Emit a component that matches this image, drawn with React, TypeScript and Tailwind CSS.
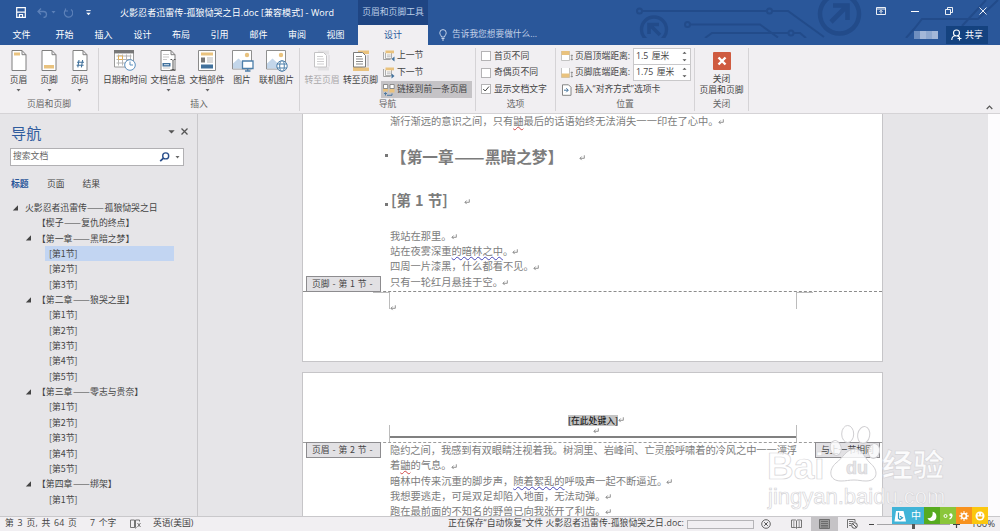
import React from 'react';

const TABS = [
  { label: '文件', width: 'w-[43px]' },
  { label: '开始', width: 'w-[43px]' },
  { label: '插入', width: 'w-[35px]' },
  { label: '设计', width: 'w-[43px]' },
  { label: '布局', width: 'w-[34px]' },
  { label: '引用', width: 'w-[43px]' },
  { label: '邮件', width: 'w-[35px]' },
  { label: '审阅', width: 'w-[42px]' },
  { label: '视图', width: 'w-[35px]' },
];

interface OutlineItem {
  level: number;
  text: string;
  selected?: boolean;
}

const OUTLINE: OutlineItem[] = [
  { level: 0, text: '火影忍者迅雷传——孤狼恸哭之日' },
  { level: 1, text: '【楔子——复仇的终点】' },
  { level: 2, text: '【第一章——黑暗之梦】' },
  { level: 3, text: '[第1节]', selected: true },
  { level: 3, text: '[第2节]' },
  { level: 3, text: '[第3节]' },
  { level: 2, text: '【第二章——狼哭之里】' },
  { level: 3, text: '[第1节]' },
  { level: 3, text: '[第2节]' },
  { level: 3, text: '[第3节]' },
  { level: 3, text: '[第4节]' },
  { level: 3, text: '[第5节]' },
  { level: 2, text: '【第三章——零志与贵奈】' },
  { level: 3, text: '[第1节]' },
  { level: 3, text: '[第2节]' },
  { level: 3, text: '[第3节]' },
  { level: 3, text: '[第4节]' },
  { level: 3, text: '[第5节]' },
  { level: 2, text: '【第四章——绑架】' },
  { level: 3, text: '[第1节]' },
];

const Caret = ({ className = '' }: { className?: string }) => (
  <svg width="5" height="3" viewBox="0 0 5 3" className={className}>
    <path d="M0.5 0h4L2.5 2.4z" fill="currentColor" />
  </svg>
);

// Full-width double dash, stretched to exactly two characters
const DashText = ({ text }: { text: string }) => {
  const [before, after] = text.split('——');
  if (after === undefined) return <>{text}</>;
  return (
    <>
      {before}
      <span className="inline-flex w-[2em] justify-center"><span className="inline-block scale-x-[1.14]">——</span></span>
      {after}
    </>
  );
};

const PageOutline = () => (
  <path d="M1 .5h10l4 4.2v15.8H1zM11 .5v4.2h4" fill="#fff" stroke="#7f7f7f" />
);

const HeaderIcon = () => (
  <svg width="16" height="21" viewBox="0 0 16 21">
    <PageOutline />
    <path d="M3 2.5h6v3H3z" fill="#e9c27e" />
  </svg>
);

const FooterIcon = () => (
  <svg width="16" height="21" viewBox="0 0 16 21">
    <PageOutline />
    <path d="M3 15h10v3.5H3z" fill="#e9c27e" />
  </svg>
);

const PageNumberIcon = () => (
  <svg width="16" height="21" viewBox="0 0 16 21">
    <PageOutline />
    <path d="M7 10l-1.2 7.4M10.6 10l-1.2 7.4M5 12.2h7M4.6 15.2h7" stroke="#41719c" strokeWidth="1.1" fill="none" />
  </svg>
);

const DateTimeIcon = () => (
  <svg width="22" height="21" viewBox="0 0 22 21">
    <path d="M.5 .5h19v16.5H.5z" fill="#fff" stroke="#9a9a9a" />
    <path d="M0 0h20v3.4H0z" fill="#777" />
    <path d="M2.5 6h15M2.5 9.5h15M2.5 13h12M4.5 4.5v11M8.5 4.5v11M12.5 4.5v11M16.5 4.5v6" stroke="#b5b5b5" />
    <path d="M4.5 6h4v3.5h-4z" fill="#fff" stroke="#dfae58" />
    <circle cx="16" cy="15" r="5.3" fill="#fff" stroke="#5b8fbe" />
    <path d="M16 11.5V15h3" fill="none" stroke="#5b8fbe" />
  </svg>
);

const DocInfoIcon = () => (
  <svg width="16" height="21" viewBox="0 0 16 21">
    <PageOutline />
    <path d="M3 4.5h6M3 7h6M3 9.5h4M3 18h7" stroke="#c9c9c9" />
    <path d="M2.5 13h8v3.5h-8z" fill="#41719c" />
    <path d="M4 14.7h5" stroke="#d8e5f1" />
    <path d="M10.5 9.5h1.5l1 1 1-1h1.5M13 10.5v8.5M10.5 20h1.5l1-1 1 1h1.5" stroke="#555" fill="none" />
  </svg>
);

const QuickPartsIcon = () => (
  <svg width="18" height="21" viewBox="0 0 18 21">
    <path d="M.5 .5h17v20H.5z" fill="#fff" stroke="#8a8a8a" />
    <path d="M3 2.5h12v3H3z" fill="#e9c27e" />
    <path d="M3 7.5h4v5H3z" fill="#777" />
    <path d="M9 8h6M9 10h6M9 12h6" stroke="#b5b5b5" />
    <path d="M3 14.5h12v4H3z" fill="#41719c" />
  </svg>
);

const PictureIcon = ({ online = false }: { online?: boolean }) => (
  <svg width="23" height="22" viewBox="0 0 23 22">
    <path d="M1.5 .5h19v18.5h-19z" fill="#fff" stroke="#8f8f8f" />
    <circle cx="16" cy="5" r="2.2" fill="#e9c27e" />
    <path d="M2 18.5v-5l5.5-5 6 5.5v4.5z" fill="#c3d6ea" />
    {online ? (
      <g fill="#fff" stroke="#4d7faa">
        <circle cx="17" cy="16" r="5.2" />
        <ellipse cx="17" cy="16" rx="2.3" ry="5.2" />
        <path d="M12 14h10M12 18h10" />
      </g>
    ) : (
      <g fill="#fff" stroke="#4d7faa" strokeWidth="1.3">
        <path d="M11.5 11h10.5v7.5H11.5z" />
        <path d="M16.7 18.5v2.5M14 21h5.5" />
      </g>
    )}
  </svg>
);

const GotoIcon = ({ footer = false }: { footer?: boolean }) => (
  <svg width="18" height="22" viewBox="0 0 18 22">
    {footer ? (
      <path d="M6 .5h11v3.5H6zM1 16.5h9.5v4.5H1zM5 17.500h12v3.500H5z" fill="#e9c27e" />
    ) : (
      <path d="M5 .5h11v4H5zM5 17h11v3.5H5z" fill="#e2e1e3" />
    )}
    <path d="M1.5 2.5h9l3 3V17h-12z" fill="#fff" stroke={footer ? '#7b7b7b' : '#c4c3c5'} />
    <path d="M4 6.5h6M4 9h7M4 11.5h7M4 14h7" stroke={footer ? '#8b8b8b' : '#cfced0'} />
    <path d="M16 5v11.500" stroke={footer ? '#a9a8aa' : '#cfced0'} strokeWidth=".8" />
  </svg>
);

const SectionIcon = ({ next = false }: { next?: boolean }) => (
  <svg width="12" height="12" viewBox="0 0 12 12">
    <path d="M.6 2v7.5h7" fill="#fff" stroke="#8a8a8a" strokeWidth=".8" />
    <path d="M2.5 3v5.5h6V3" fill="#fff" stroke="#9a9a9a" strokeWidth=".8" />
    <path d="M2.5 .5h8.500v2.800h-8.500z" fill="#e9c27e" />
    <path d="M3.8 5h4M3.8 6.800h4" stroke="#999" strokeWidth=".7" />
    <path d={next ? 'M8.5 6.5v5l3-2.5z' : 'M11.5 6.5v5l-3-2.5z'} fill="#41719c" />
  </svg>
);

const LinkPrevIcon = () => (
  <svg width="12" height="12" viewBox="0 0 12 12">
    <path d="M.5 .5h4.2v4H.5zM7 .5h4.2v4H7z" fill="#fff" stroke="#777" strokeWidth=".8" />
    <path d="M0 5h5v2.5H0zM6.5 5h5v3.5h-5z" fill="#e9c27e" />
    <path d="M2.5 11.5V9M1 10l1.5-1.5L4 10M4 11.3h5V9.5" stroke="#41719c" strokeWidth=".9" fill="none" />
  </svg>
);

const DistanceIcon = ({ bottom = false }: { bottom?: boolean }) => (
  <svg width="12" height="12" viewBox="0 0 12 12">
    <path d="M.5 1v9.5h8V1" fill="#fff" stroke="#b5b5b5" strokeWidth=".8" />
    <path d={bottom ? 'M.5 6.5h8v4h-8z' : 'M.5 1h8v4h-8z'} fill="#e9c27e" />
    <path d="M10.8 5v5M9.8 6l1-1.2 1 1.2M9.8 9l1 1.2 1-1.2" stroke="#777" strokeWidth=".7" fill="none" />
  </svg>
);

const AlignTabIcon = () => (
  <svg width="12" height="12" viewBox="0 0 12 12">
    <path d="M1.5 .8h6l2.5 2.5v8H1.5z" fill="#fff" stroke="#777" strokeWidth=".9" />
    <path d="M3 6.2h4M5.3 4.2l2 2-2 2" stroke="#41719c" strokeWidth="1" fill="none" />
  </svg>
);

const BigButton = ({ icon, label, width, caret, disabled }: {
  icon: React.ReactNode;
  label: string;
  width: string;
  caret?: boolean;
  disabled?: boolean;
}) => (
  <div className={`flex shrink-0 flex-col items-center ${width} ${disabled ? 'text-[#a9a8aa]' : 'text-[#444]'}`}>
    <div className="flex h-[22px] items-start">{icon}</div>
    <span className="mt-[2px] whitespace-nowrap text-[8.8px] leading-[12px]">{label}</span>
    {caret && <Caret className="mt-[3px] text-[#666]" />}
  </div>
);

const Group = ({ label, width, children }: { label: string; width: string; children: React.ReactNode }) => (
  <div className={`flex shrink-0 flex-col ${width}`}>
    <div className="mt-[3px] flex h-[63px] flex-col border-r border-[#d5d3d6]">
      <div className="flex h-[52px] w-full">{children}</div>
      <div className="text-center text-[8.8px] leading-[13px] text-[#666]">{label}</div>
    </div>
  </div>
);

const CheckRow = ({ label, checked }: { label: string; checked?: boolean }) => (
  <div className="flex h-[16.6px] items-center">
    <span className="flex h-[10px] w-[10px] items-center justify-center border border-[#b4b3b5] bg-white">
      {checked && (
        <svg width="8" height="8" viewBox="0 0 8 8">
          <path d="M1.2 4l2 2L7 1.5" stroke="#444" fill="none" />
        </svg>
      )}
    </span>
    <span className="ml-[3px] whitespace-nowrap text-[8.8px]">{label}</span>
  </div>
);

const DistanceRow = ({ label, value, bottom }: { label: string; value: string; bottom?: boolean }) => (
  <div className="flex h-[16.5px] items-center">
    <DistanceIcon bottom={bottom} />
    <span className="ml-[2px] w-[58px] whitespace-nowrap text-[8.8px]">{label}</span>
    <div className="flex h-[17px] w-[58px] items-center justify-between border border-[#c9c8ca] bg-white pl-[2px] pr-[3px] text-[8.8px]">
      <span className="[word-spacing:1px]">{value}</span>
      <svg width="5" height="11" viewBox="0 0 5 11">
        <path d="M.5 2.8L2.5 .8l2 2zM.5 8.2l2 2 2-2z" fill="#555" />
      </svg>
    </div>
  </div>
);

const TitleArt = () => (
  <svg width="460" height="38" viewBox="540 0 460 38" className="absolute right-0 top-0">
    <g fill="none" stroke="#224b8a" strokeWidth="2">
      <circle cx="639.5" cy="11" r="2.5" />
      <path d="M642 11h124M772 11h16l36 26" />
      <circle cx="769.5" cy="11" r="2.5" />
      <circle cx="687.5" cy="24.5" r="2.5" />
      <path d="M690 24.5h70l18 13" />
      <circle cx="654" cy="29.5" r="12.5" strokeWidth="3.4" />
      <path d="M660 35l-9.5-9.5M649 34v-9.5h10" strokeWidth="3.6" />
      <path d="M705 38l7-5h76" />
      <circle cx="791" cy="33" r="2.5" />
      <path d="M794 33h6l6 5" />
      <circle cx="839.5" cy="14" r="19.5" strokeWidth="4.5" />
      <path d="M831 22l16-16M833 5.5h14.5V20" strokeWidth="4.6" />
      <path d="M906 38l8-9 8-10h56l20-19M962 26L986 0" />
    </g>
  </svg>
);

const TitleBar = () => (
  <header className="relative h-[45px] shrink-0 overflow-hidden bg-[#2a579a] text-white">
    <TitleArt />
    <div className="relative flex h-[25px] items-center">
      <div className="flex w-[120px] items-center pl-[16px]">
        <svg width="10" height="11" viewBox="0 0 10 11">
          <path d="M.7 .7h8.6v9.6H.7z" fill="none" stroke="#fff" strokeWidth="1.2" />
          <path d="M1 5.2h8M3.5 10V7.5h3V10" stroke="#fff" strokeWidth="1.2" fill="none" />
        </svg>
        <svg width="11" height="10" viewBox="0 0 11 10" className="ml-[11px]">
          <path d="M4 .5L1 3.5l3 3M1 3.5h5.5a3 3 0 010 6" stroke="#5c80b8" strokeWidth="1.3" fill="none" />
        </svg>
        <Caret className="ml-[3px] text-[#5c80b8]" />
        <svg width="10" height="10" viewBox="0 0 10 10" className="ml-[7px]">
          <path d="M8 1.5A4.2 4.2 0 112.5 2M2.5 .5v2.5h2.5" stroke="#5c80b8" strokeWidth="1.2" fill="none" />
        </svg>
        <svg width="5" height="6" viewBox="0 0 5 6" className="ml-[13px]">
          <path d="M.3 .6h4.4" stroke="#fff" strokeWidth=".9" />
          <path d="M.3 2.700h4.400L2.500 5.300z" fill="#fff" />
        </svg>
      </div>
      <span className="w-[238px] whitespace-nowrap text-[9px] tracking-[0.06px]">火影忍者迅雷传-孤狼恸哭之日.doc [兼容模式] - Word</span>
      <div className="flex h-[25px] w-[70px] items-center justify-center bg-[#1f4583] text-[8.8px] text-[#b9cbe6]">页眉和页脚工具</div>
      <div className="ml-auto flex items-center pb-[3px] pr-[13px]">
        <svg width="10" height="8" viewBox="0 0 10 8">
          <path d="M.5 .5h9v7h-9zM.5 2h9M5 6.5V3.5M3.5 4.8L5 3.3l1.5 1.5" fill="none" stroke="#fff" strokeWidth=".9" />
        </svg>
        <svg width="8" height="8" viewBox="0 0 8 8" className="ml-[25px]">
          <path d="M0 4.500h8" stroke="#fff" />
        </svg>
        <svg width="8" height="8" viewBox="0 0 8 8" className="ml-[26px]">
          <path d="M.5 2.5h5v5h-5zM2.5 2.5v-2h5v5h-2" fill="none" stroke="#fff" strokeWidth=".9" />
        </svg>
        <svg width="8" height="8" viewBox="0 0 8 8" className="ml-[26px]">
          <path d="M.5 .5l7 7M7.5 .5l-7 7" stroke="#fff" strokeWidth=".9" />
        </svg>
      </div>
    </div>
    <div className="relative flex h-[20px] items-center text-[9px]">
      <nav className="flex w-[358px]">
        {TABS.map((tab) => (
          <span key={tab.label} className={`flex shrink-0 justify-center ${tab.width}`}>{tab.label}</span>
        ))}
      </nav>
      <div className="flex h-[20px] w-[70px] items-center justify-center bg-[#f1eff2] text-[#2a579a]">设计</div>
      <svg width="8" height="12" viewBox="0 0 8 12" className="ml-[11px]">
        <path d="M2.5 8C2.5 6.5 .8 6 .8 3.8a3.2 3.2 0 016.4 0C7.2 6 5.5 6.5 5.5 8zM2.5 9.5h3M3 11h2" fill="none" stroke="#d5e0f0" strokeWidth=".9" />
      </svg>
      <span className="ml-[5px] text-[8.7px] text-[#c3d1e8]">告诉我您想要做什么...</span>
      <div className="ml-auto flex items-center">
        <div className="flex h-[8px] w-[24px]">
          <span className="h-full w-[6px] bg-[#6f8fc0]" />
          <span className="h-full w-[6px] bg-[#a3b7d8]" />
          <span className="h-full w-[6px] bg-[#8fa8cf]" />
          <span className="h-full w-[6px] bg-[#a3b7d8]" />
        </div>
        <div className="ml-[8px] mr-[12px] flex h-[18px] w-[42px] items-center bg-[#14427f] pl-[5px]">
          <svg width="11" height="12" viewBox="0 0 11 12">
            <circle cx="5.5" cy="4" r="3" fill="none" stroke="#fff" strokeWidth="1.1" />
            <path d="M.8 11c0-2.5 1.5-4 3.5-4.2M6.5 7c.8.2 1 .5 1.5 1M8.5 7.5v4M6.5 9.5h4" fill="none" stroke="#fff" strokeWidth="1.1" />
          </svg>
          <span className="ml-[3px]">共享</span>
        </div>
      </div>
    </div>
  </header>
);

const Ribbon = () => (
  <div className="flex h-[69px] shrink-0 border-b border-[#d5d3d6] bg-[#f1eff2] text-[#444]">
    <Group label="页眉和页脚" width="w-[99px]">
      <div className="flex pl-[3px] pt-[2px]">
        <BigButton icon={<HeaderIcon />} label="页眉" width="w-[31px]" caret />
        <BigButton icon={<FooterIcon />} label="页脚" width="w-[30px]" caret />
        <BigButton icon={<PageNumberIcon />} label="页码" width="w-[31px]" caret />
      </div>
    </Group>
    <Group label="插入" width="w-[201px]">
      <div className="flex pl-[4px] pt-[2px]">
        <BigButton icon={<DateTimeIcon />} label="日期和时间" width="w-[44px]" />
        <BigButton icon={<DocInfoIcon />} label="文档信息" width="w-[42px]" caret />
        <BigButton icon={<QuickPartsIcon />} label="文档部件" width="w-[36px]" caret />
        <BigButton icon={<PictureIcon />} label="图片" width="w-[34px]" />
        <BigButton icon={<PictureIcon online />} label="联机图片" width="w-[35px]" />
      </div>
    </Group>
    <Group label="导航" width="w-[176px]">
      <div className="flex pl-[3px] pt-[2px]">
        <BigButton icon={<GotoIcon />} label="转至页眉" width="w-[38px]" disabled />
        <BigButton icon={<GotoIcon footer />} label="转至页脚" width="w-[39px]" />
      </div>
      <div className="flex w-[92px] flex-col pl-[1px] text-[8.8px]">
        <div className="flex h-[16px] items-center pl-[2px]"><SectionIcon /><span className="ml-[2px]">上一节</span></div>
        <div className="flex h-[17px] items-center pl-[2px]"><SectionIcon next /><span className="ml-[2px]">下一节</span></div>
        <div className="flex h-[17px] w-[91px] items-center whitespace-nowrap bg-[#c5c3c6] pl-[2px]"><LinkPrevIcon /><span className="ml-[2px]">链接到前一条页眉</span></div>
      </div>
    </Group>
    <Group label="选项" width="w-[80px]">
      <div className="flex flex-col pl-[5px]">
        <CheckRow label="首页不同" />
        <CheckRow label="奇偶页不同" />
        <CheckRow label="显示文档文字" checked />
      </div>
    </Group>
    <Group label="位置" width="w-[139px]">
      <div className="flex flex-col pl-[5px]">
        <DistanceRow label="页眉顶端距离:" value="1.5 厘米" />
        <DistanceRow label="页脚底端距离:" value="1.75 厘米" bottom />
        <div className="flex h-[17px] items-center whitespace-nowrap text-[8.8px]">
          <AlignTabIcon />
          <span className="ml-[2px]">插入“对齐方式”选项卡</span>
        </div>
      </div>
    </Group>
    <Group label="关闭" width="w-[54px]">
      <div className="flex w-full flex-col items-center pt-[4px] text-[8.8px] leading-[11px]">
        <svg width="18" height="18" viewBox="0 0 18 18">
          <rect width="18" height="18" rx="1" fill="#cf5b40" />
          <path d="M5.5 5.5l7 7M12.5 5.5l-7 7" stroke="#fff" strokeWidth="2.4" />
        </svg>
        <span className="mt-[4px]">关闭</span>
        <span className="whitespace-nowrap">页眉和页脚</span>
      </div>
    </Group>
    <svg width="7" height="5" viewBox="0 0 7 5" className="ml-auto mr-[7px] mt-[60px]">
      <path d="M.7 4l2.8-2.8L6.3 4" fill="none" stroke="#555" strokeWidth="1.2" />
    </svg>
  </div>
);

const INDENTS = ['pl-[12px]', 'pl-[25px]', 'pl-[25px]', 'pl-[37px]'];

const NavigationPane = () => (
  <aside className="flex w-[198px] shrink-0 flex-col border-r border-[#c9c8cb] text-[#444]">
    <div className="mt-[9px] flex h-[20px] items-center pl-[11px] pr-[9px]">
      <h2 className="text-[15.2px] leading-[20px] text-[#2f5c9e]">导航</h2>
      <svg width="7" height="4" viewBox="0 0 7 4" className="mb-[3px] ml-auto">
        <path d="M.3 .2h6.4L3.5 3.6z" fill="#555" />
      </svg>
      <svg width="7" height="7" viewBox="0 0 7 7" className="mb-[3px] ml-[6px]">
        <path d="M.5 .5l6 6M6.5 .5l-6 6" stroke="#555" strokeWidth="1.3" />
      </svg>
    </div>
    <div className="ml-[10px] mt-[5px] flex h-[18px] w-[174px] items-center border border-[#b1b0b3] bg-white pl-[2px] pr-[3px] text-[8.8px] text-[#666]">
      <span>搜索文档</span>
      <svg width="11" height="10" viewBox="0 0 11 10" className="ml-auto">
        <circle cx="6.7" cy="3.9" r="3" fill="none" stroke="#2a4f8c" strokeWidth="1.4" />
        <path d="M4.5 6.2L1.2 9.2" stroke="#2a4f8c" strokeWidth="1.8" />
      </svg>
      <Caret className="ml-[5px]" />
    </div>
    <div className="mt-[11px] flex h-[16px] items-center pl-[11px] text-[8.8px]">
      <span className="w-[36px] font-bold text-[#2a579a]">标题</span>
      <span className="w-[35.5px]">页面</span>
      <span>结果</span>
    </div>
    <ul className="mt-[7px] font-['Noto_Sans_CJK_SC',sans-serif] text-[8.85px]">
      {OUTLINE.map((item, i) => (
        <li key={i} className={`flex h-[15.35px] items-center ${INDENTS[item.level]}`}>
          {item.level < 3 && (
            <svg width="13" height="6" viewBox="0 0 13 6" className="shrink-0">
              {item.level !== 1 && <path d="M6 .3v5.2H.8z" fill="#444" />}
            </svg>
          )}
          <span
            className={`whitespace-nowrap leading-[15.35px] ${item.level === 3 ? 'ml-[8px] w-[129px] pl-[4px]' : ''} ${item.level === 1 || item.level === 2 ? '-ml-px' : ''} ${item.selected ? 'bg-[#c2d5f2]' : ''}`}
          >
            <DashText text={item.text} />
          </span>
        </li>
      ))}
    </ul>
  </aside>
);

const Enter = ({ className = '-ml-px' }: { className?: string }) => (
  <svg width="6" height="6" viewBox="0 0 6 6" className={`inline-block ${className}`}>
    <path d="M5.3 .3v3H1M2.7 1.5L.9 3.3l1.8 1.8" fill="none" stroke="#777" strokeWidth=".8" />
  </svg>
);

const Line = ({ children, className = '' }: { children: React.ReactNode; className?: string }) => (
  <p className={`h-[15.3px] whitespace-nowrap leading-[15.3px] ${className}`}>{children}</p>
);

const Spell = ({ children }: { children: React.ReactNode }) => (
  <span className="underline decoration-[#d04848] decoration-wavy decoration-[0.5px] underline-offset-1">{children}</span>
);

const Grammar = ({ children }: { children: React.ReactNode }) => (
  <span className="underline decoration-[#4646b8] decoration-wavy decoration-[0.5px] underline-offset-1">{children}</span>
);

const MarginTag = ({ className, children }: { className: string; children: React.ReactNode }) => (
  <div className={`absolute flex h-[16px] items-center whitespace-nowrap border border-[#8d8c8f] bg-[#e2e1e4] pl-[5px] text-[8.8px] text-[#444] [word-spacing:0.9px] ${className}`}>
    {children}
  </div>
);

const Document = () => (
  <main className="relative flex flex-1 flex-col overflow-hidden pl-[104px] font-['Noto_Sans_CJK_SC',sans-serif]">
    <section className="relative h-[248px] w-[581px] shrink-0 border border-t-0 border-[#c6c5c8] bg-white pl-[87px] text-[10.27px] text-[#7c7c7c]">
      <Line className="-mt-px">渐行渐远的意识之间，只有<Spell>鼬</Spell>最后的话语始终无法消失一一印在了心中。<Enter /></Line>
      <div className="-ml-[5px] mt-[15px] flex h-[26px] items-center text-[15.65px] font-bold">
        <span className="-mt-[2px] mr-[3px] h-[3px] w-[3px] bg-[#777]" />
        <span className="whitespace-nowrap"><DashText text="【第一章——黑暗之梦】" /></span>
        <Enter className="ml-[16px] mt-[4px]" />
      </div>
      <div className="-ml-[5px] mt-[18px] flex h-[26px] items-center text-[14.5px] font-bold">
        <span className="mr-[3px] mt-[8px] h-[3px] w-[3px] bg-[#777]" />
        <span className="whitespace-nowrap [word-spacing:0.8px]">[第 1 节]</span>
        <Enter className="ml-[16px] mt-[3px]" />
      </div>
      <div className="mt-[14.5px]">
        <Line>我站在那里。<Enter /></Line>
        <Line>站在夜雾深重<Grammar>的暗林之中</Grammar>。<Enter /></Line>
        <Line>四周一片漆黑，什么都看不见。<Enter /></Line>
        <Line>只有一轮红月悬挂于空。<Enter /></Line>
      </div>
      <div className="absolute left-0 top-[177px] w-full border-t border-dashed border-[#8c8c8c]" />
      <div className="absolute left-[70px] top-[178px] h-[17px] w-[17px] border-r border-t border-[#bcbcbc]" />
      <div className="absolute left-[493px] top-[178px] h-[17px] w-[17px] border-l border-t border-[#bcbcbc]" />
      <Enter className="absolute left-[87px] top-[191px]" />
      <MarginTag className="left-[3px] top-[162px] w-[75px]">页脚 - 第 1 节 -</MarginTag>
    </section>
    <section className="relative mt-[10px] h-[160px] w-[581px] shrink-0 border border-[#c6c5c8] bg-white pl-[87px] text-[10.27px] text-[#7c7c7c]">
      <div className="mt-[41px] flex h-[12px] w-[407px] items-center justify-center pl-[5px] text-[8.8px] font-medium text-[#222]">
        <span className="bg-[#c4c4c4] leading-[11px]">[在此处键入]</span>
        <Enter className="ml-0" />
      </div>
      <div className="flex h-[10px] w-[407px] items-center justify-center pl-[4px]"><Enter className="ml-0" /></div>
      <div className="h-[2px] w-[407px] bg-[#808080]" />
      <div className="mt-[4px]">
        <Line className="tracking-[-0.09px]">隐约之间，我感到有双眼睛注视着我。树洞里、岩峰间、亡灵般呼啸着的冷风之中一一漂浮</Line>
        <Line>着<Spell>鼬</Spell>的气息。<Enter /></Line>
        <Line>暗林中传来沉重的脚步声，<Grammar>随着絮乱的</Grammar>呼吸声一起不断逼近。<Enter /></Line>
        <Line>我想要逃走，可是双足却陷入地面，无法动弹。<Enter /></Line>
        <Line>跑在最前面的不知名的野兽已向我张开了利齿。<Enter /></Line>
      </div>
      <div className="absolute left-0 top-[69px] w-full border-t border-dashed border-[#9c9c9c]" />
      <div className="absolute left-[86px] top-[52px] h-[17px] w-px bg-[#bcbcbc]" />
      <div className="absolute left-[493px] top-[52px] h-[17px] w-px bg-[#bcbcbc]" />
      <MarginTag className="left-[3px] top-[69px] w-[75px]">页眉 - 第 2 节 -</MarginTag>
      <MarginTag className="left-[512px] top-[69px] w-[65px]">与上一节相同</MarginTag>
    </section>
  </main>
);

const StatusBar = () => (
  <footer className="flex h-[15px] shrink-0 items-center whitespace-nowrap border-t border-[#c9c8cb] bg-[#f1eff2] text-[8.8px] text-[#444]">
    <span className="w-[85px] pl-[5px] tracking-[0.2px] [word-spacing:1.1px]">第 3 页, 共 64 页</span>
    <span className="w-[45px] pl-[5px] [word-spacing:1.5px]">7 个字</span>
    <svg width="12" height="10" viewBox="0 0 12 10">
      <path d="M.5 1h4v7.5h-4zM4.5 8.5L5.5 9.5M5.5 1h4v1.5M6.5 8.5h-1V1M7.5 4l3 4M10.5 4l-3 4" fill="none" stroke="#666" strokeWidth=".9" />
    </svg>
    <span className="ml-[11px] w-[295px]">英语(美国)</span>
    <span className="w-[239px] tracking-[0.09px]">正在保存“自动恢复”文件 火影忍者迅雷传-孤狼恸哭之日.doc:</span>
    <span className="h-[9px] w-[67px] border border-[#b5b4b7]" />
    <svg width="10" height="10" viewBox="0 0 10 10" className="ml-[7px]">
      <circle cx="5" cy="5" r="4.3" fill="none" stroke="#555" strokeWidth=".9" />
      <path d="M3.2 3.2l3.6 3.6M6.8 3.2L3.2 6.8" stroke="#555" />
    </svg>
    <svg width="11" height="10" viewBox="0 0 11 10" className="ml-[20px]">
      <path d="M.5 1h4l1 .8 1-.8h4v7.5h-4l-1 1-1-1h-4zM5.5 2v7M2 3h1.5M2 5h1.5M2 7h1.5M7.5 3H9M7.5 5H9M7.5 7H9" fill="none" stroke="#666" strokeWidth=".9" />
    </svg>
    <span className="ml-[9px] flex h-[15px] w-[27px] items-center justify-center bg-[#c5c3c6]">
      <svg width="11" height="10" viewBox="0 0 11 10">
        <path d="M.5 .5h10v9H.5zM2 2.5h7M2 4.5h7M2 6.5h7M2 8h7" fill="#999" stroke="#666" strokeWidth=".9" />
      </svg>
    </span>
    <svg width="11" height="10" viewBox="0 0 11 10" className="ml-[9px]">
      <path d="M.5 9V.5h7.5V3M2 2.5h4.5M2 4.5h2.5M2 6.5h2" fill="none" stroke="#666" strokeWidth=".9" />
      <circle cx="7.5" cy="6.5" r="2.8" fill="none" stroke="#555" />
      <path d="M5.5 4.5l4 4" stroke="#555" />
    </svg>
    <span className="ml-[11px] h-px w-[5px] bg-[#444]" />
    <span className="ml-[3px] flex h-[9px] w-[73px] items-center justify-center">
      <span className="h-px w-[35px] bg-[#a5a4a7]" />
      <span className="h-[9px] w-[3px] bg-[#555]" />
      <span className="h-px w-[35px] bg-[#a5a4a7]" />
    </span>
    <svg width="7" height="7" viewBox="0 0 7 7" className="ml-[3px]">
      <path d="M0 3.5h7M3.5 0v7" stroke="#444" strokeWidth="1.2" />
    </svg>
    <span className="ml-[11px] text-[9.5px]">100%</span>
  </footer>
);

const Watermark = () => (
  <div className="absolute left-[766px] top-[420px] h-[92px] w-[184px] font-['Liberation_Sans','Noto_Sans_CJK_SC',sans-serif] text-white/85 [-webkit-text-stroke:0.7px_#d6d5d8]">
    <svg width="60" height="64" viewBox="0 0 60 64" className="absolute left-[62px] top-[2px]">
      <g fill="#fff" fillOpacity=".8" stroke="#d0cfd2">
        <ellipse cx="7.7" cy="26" rx="5.5" ry="7.5" transform="rotate(-12 7.7 26)" />
        <ellipse cx="19.700" cy="12" rx="6" ry="8.500" />
        <ellipse cx="35.700" cy="13" rx="6" ry="8.500" transform="rotate(10 35.7 13)" />
        <ellipse cx="46" cy="29" rx="5.5" ry="7.5" transform="rotate(12 46 29)" />
        <path d="M27 27c7 0 9 8 15 14 9 7 8 18-4 18-5 0-7-1-12-1s-8 1-13 1C1 59 0 48 8 41c7-5 10-14 19-14z" />
      </g>
    </svg>
    <span className="absolute left-[1px] top-[26px] text-[37px] font-bold leading-[42px]">Bai</span>
    <span className="absolute left-[80px] top-[38px] text-[18px] font-bold leading-[20px] text-[#dddcdf]/70">du</span>
    <span className="absolute left-[116px] top-[28px] whitespace-nowrap text-[31px] font-bold leading-[36px]">经验</span>
    <span className="absolute left-[2px] top-[64px] text-[22px] leading-[26px]">jingyan.baidu.com</span>
  </div>
);

const ImeBar = () => (
  <div className="absolute left-[892px] top-[507px] flex h-[17px] w-[96px] items-center text-[10px] text-white">
    <span className="flex h-full w-[16px] items-center justify-center bg-[#41b4d8]">
      <svg width="12" height="12" viewBox="0 0 12 12">
        <path d="M2 1h7.500L12 11.500H.5z" fill="#fff" />
        <path d="M4.500 2.500v6l1.500 1 2.500-1.800-2.500-1.500" fill="none" stroke="#2f9cc2" strokeWidth="1.200" />
      </svg>
    </span>
    <span className="flex h-full w-[16px] items-center justify-center bg-[#41b4d8]">中</span>
    <span className="flex h-full w-[16px] items-center justify-center bg-[#57ab20]">
      <svg width="10" height="10" viewBox="0 0 10 10">
        <path d="M5.5 .8a4.6 4.6 0 11-5 6.2c3 .8 6-2 5-6.2z" fill="#fff" />
      </svg>
    </span>
    <span className="flex h-full w-[16px] items-center justify-center bg-[#8bc63a]">
      <svg width="11" height="10" viewBox="0 0 11 10">
        <circle cx="2.5" cy="5" r="1.5" fill="none" stroke="#fff" />
        <circle cx="7.8" cy="3.8" r="1.5" fill="#fff" />
        <path d="M9 3.8c0 2-1 3.500-2.500 4.200" fill="none" stroke="#fff" strokeWidth="1.300" />
      </svg>
    </span>
    <span className="flex h-full w-[16px] items-center justify-center bg-[#f8921e]">
      <svg width="10" height="10" viewBox="0 0 10 10">
        <circle cx="5" cy="5" r="2.5" fill="none" stroke="#fff" strokeWidth="1.7" />
        <path d="M5 .3v1.5M5 8.2v1.5M.3 5h1.5M8.2 5h1.5M1.7 1.7l1 1M7.3 7.3l1 1M8.3 1.7l-1 1M2.7 7.3l-1 1" stroke="#fff" strokeWidth="1.3" />
      </svg>
    </span>
    <span className="flex h-full w-[16px] items-center justify-center bg-[#fbc710]">
      <svg width="10" height="10" viewBox="0 0 10 10">
        <circle cx="5" cy="5" r="4.5" fill="#fff" />
        <path d="M2.5 5.5h5a2.5 2.5 0 01-5 0z" fill="#f3ae10" />
        <path d="M3.3 2.5v1.8M6.7 2.5v1.8" stroke="#f3ae10" />
      </svg>
    </span>
  </div>
);

export default function App() {
  return (
    <div className="relative flex h-[531px] w-[1000px] flex-col overflow-hidden bg-[#e6e5e8] font-['Open_Sans','Noto_Sans_CJK_SC',sans-serif]">
      <TitleBar />
      <Ribbon />
      <div className="flex h-[402px] shrink-0 overflow-hidden">
        <NavigationPane />
        <Document />
        <div className="w-[12px] shrink-0 bg-[#fdfcfe]" />
      </div>
      <StatusBar />
      <Watermark />
      <ImeBar />
    </div>
  );
}
